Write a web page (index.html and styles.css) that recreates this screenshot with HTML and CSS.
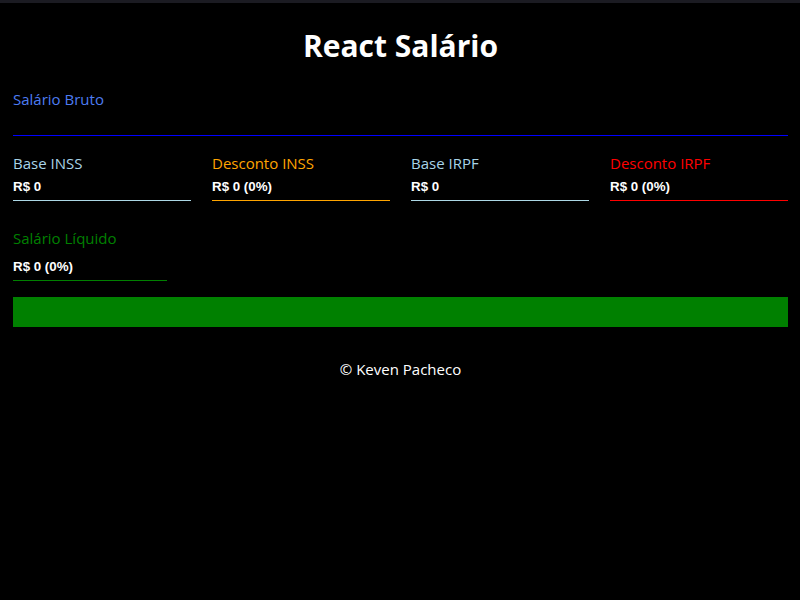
FILE: index.html
```html
<!DOCTYPE html>
<html lang="pt-BR">
<head>
<meta charset="utf-8">
<title>React Salário</title>
<link rel="stylesheet" href="styles.css">
</head>
<body>
<div class="topbar"></div>
<main class="container">
  <h1 class="title">React Salário</h1>
  <div class="gross">
    <label class="gross-label" for="gross">Salário Bruto</label>
    <div class="gross-field"><input class="gross-input" id="gross" type="text"></div>
  </div>
  <div class="cards">
    <div class="card card-base">
      <span class="card-label">Base INSS</span>
      <span class="card-value">R$ 0</span>
    </div>
    <div class="card card-inss">
      <span class="card-label">Desconto INSS</span>
      <span class="card-value">R$ 0 (0%)</span>
    </div>
    <div class="card card-base">
      <span class="card-label">Base IRPF</span>
      <span class="card-value">R$ 0</span>
    </div>
    <div class="card card-irpf">
      <span class="card-label">Desconto IRPF</span>
      <span class="card-value">R$ 0 (0%)</span>
    </div>
  </div>
  <div class="card card-net">
    <span class="card-label">Salário Líquido</span>
    <span class="card-value">R$ 0 (0%)</span>
  </div>
  <div class="bar"><div class="bar-fill" style="width:100%"></div></div>
  <footer class="footer">© Keven Pacheco</footer>
</main>
</body>
</html>
```

FILE: styles.css
```css
html, body {
  margin: 0;
  padding: 0;
  background: #000;
  color: #fff;
  font-family: "Open Sans", "Noto Sans", sans-serif;
}

.topbar {
  height: 3px;
  background: #1b1b22;
}

.container {
  padding: 0 12px 0 13px;
  display: flex;
  flex-direction: column;
}

.title {
  margin: 25px 0 0;
  font-size: 30px;
  line-height: 36px;
  font-weight: 700;
  text-align: center;
  color: #fff;
}

.gross {
  margin-top: 25px;
  display: flex;
  flex-direction: column;
}

.gross-label {
  font-size: 15px;
  line-height: 20px;
  color: #4d7cf2;
}

.gross-field {
  height: 26px;
  border-bottom: 1px solid #0000ff;
  display: flex;
}

.gross-input {
  flex: 1;
  padding: 0;
  margin: 0;
  border: 0;
  background: transparent;
  color: #fff;
  outline: none;
}

.cards {
  margin-top: 17px;
  display: grid;
  grid-template-columns: repeat(4, 1fr);
  column-gap: 21px;
}

.card {
  display: flex;
  flex-direction: column;
  padding-bottom: 5px;
  border-bottom: 1px solid #add8e6;
}

.card-label {
  font-size: 15px;
  line-height: 20px;
}

.card-value {
  margin-top: 6px;
  font-family: "Liberation Sans", Arial, sans-serif;
  font-weight: 700;
  font-size: 13.33px;
  line-height: 16px;
  color: #fff;
}

.card-base .card-label { color: #a8d4e8; }
.card-base { border-bottom-color: #add8e6; }

.card-inss .card-label { color: #ffa500; }
.card-inss { border-bottom-color: #ffa500; }

.card-irpf .card-label { color: #ff0000; }
.card-irpf { border-bottom-color: #ff0000; }

.card-net {
  margin-top: 27px;
  width: 154px;
  border-bottom-color: #008000;
  padding-bottom: 5px;
}
.card-net .card-label { color: #008000; }
.card-net .card-value { margin-top: 11px; }

.bar {
  margin-top: 16px;
  height: 30px;
  display: flex;
}

.bar-fill {
  background: #008000;
  height: 100%;
}

.footer {
  margin-top: 32px;
  text-align: center;
  font-size: 15px;
  line-height: 20px;
  color: #fff;
}
```
